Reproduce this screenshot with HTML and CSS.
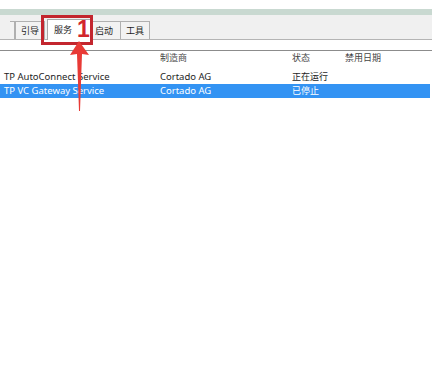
FILE: index.html
```html
<!DOCTYPE html>
<html>
<head>
<title>服务</title>
<link rel="stylesheet" href="styles.css">
</head>
<body>

<div class="window">

	<div class="strip"></div>

	<div class="tabbar">
		<div class="tab tab-cut"></div>
		<div class="tab">引导</div>
		<div class="tab tab-active">服务</div>
		<div class="tab tab-start">启动</div>
		<div class="tab">工具</div>
	</div>

	<div class="spacer"></div>

	<div class="list">
		<div class="row row-head">
			<span class="col col-name"></span>
			<span class="col col-maker">制造商</span>
			<span class="col col-state">状态</span>
			<span class="col col-date">禁用日期</span>
		</div>
		<div class="row">
			<span class="col col-name">TP AutoConnect Service</span>
			<span class="col col-maker">Cortado AG</span>
			<span class="col col-state">正在运行</span>
			<span class="col col-date"></span>
		</div>
		<div class="row row-selected">
			<span class="col col-name">TP VC Gateway Service</span>
			<span class="col col-maker">Cortado AG</span>
			<span class="col col-state">已停止</span>
			<span class="col col-date"></span>
		</div>
	</div>

</div>

<!-- annotation drawn over the screenshot -->
<div class="mark">
	<span class="mark-num">1</span>
</div>

<svg class="arrow" width="24" height="72" viewBox="0 0 24 72">
	<polygon points="11,0 21,14 14,13 12,70 11,70 9,13 2,14" fill="#e83a36" />
</svg>

</body>
</html>
```

FILE: styles.css
```css
body {
	margin: 0;
	background: #fff;
	font-family: "Noto Sans", "Noto Sans CJK SC", sans-serif;
	font-size: 9.5px;
	color: #1e1e1e;
}

.window {
	width: 432px;
	padding-top: 9px;
}

.strip {
	height: 6px;
	background: #c9d9d1;
}

.tabbar {
	display: flex;
	align-items: flex-end;
	height: 24px;
	background: #f0f0f0;
	border-bottom: 1px solid #b4b4b4;
}

.tab {
	height: 17px;
	line-height: 17px;
	padding: 0 5px;
	border: 1px solid #b0b0b0;
	border-bottom: none;
	background: #f2f2f2;
	font-family: "Noto Sans CJK SC", sans-serif;
	font-size: 9px;
	margin-right: -1px;
	white-space: nowrap;
}

.tab-cut {
	width: 4px;
	padding: 0;
	border-left: none;
	margin-right: 0;
	margin-left: 10px;
}

.tab-active {
	height: 21px;
	line-height: 19px;
	background: #fff;
	padding: 0 0 0 6px;
	margin-left: 3px;
	margin-bottom: -1px;
	border-color: #a8a8a8;
	width: 46px;
	box-sizing: border-box;
	position: relative;
	z-index: 1;
}

.tab-start {
	padding-left: 2px;
	padding-right: 7px;
}

.spacer {
	height: 10px;
}

.list {
	border-top: 1px solid #8c8c8c;
}

.row {
	display: flex;
	height: 14px;
	line-height: 14px;
}

.row-head {
	height: 19px;
	line-height: 14px;
	color: #444;
	font-size: 9px;
}

.col {
	white-space: nowrap;
	overflow: hidden;
}

.col-name {
	width: 156px;
	padding-left: 4px;
}

.col-maker {
	width: 132px;
}

.col-state {
	width: 53px;
	font-family: "Noto Sans CJK SC", sans-serif;
	font-size: 9px;
}

.col-date {
	flex: 1;
	font-family: "Noto Sans CJK SC", sans-serif;
	font-size: 9px;
}

.row-head .col-maker {
	font-family: "Noto Sans CJK SC", sans-serif;
}

.row-selected {
	background: #3393f3;
	color: #fff;
	margin-right: 2px;
}

.mark {
	position: absolute;
	z-index: 2;
	left: 41px;
	top: 15px;
	width: 46px;
	height: 24px;
	border: 3px solid #c3262e;
}

.mark-num {
	position: absolute;
	left: 33px;
	top: -1px;
	font-family: "Liberation Sans", sans-serif;
	font-weight: bold;
	font-size: 23px;
	line-height: 25px;
	color: #d2262d;
}

.arrow {
	position: absolute;
	z-index: 3;
	left: 68px;
	top: 41px;
}
```
